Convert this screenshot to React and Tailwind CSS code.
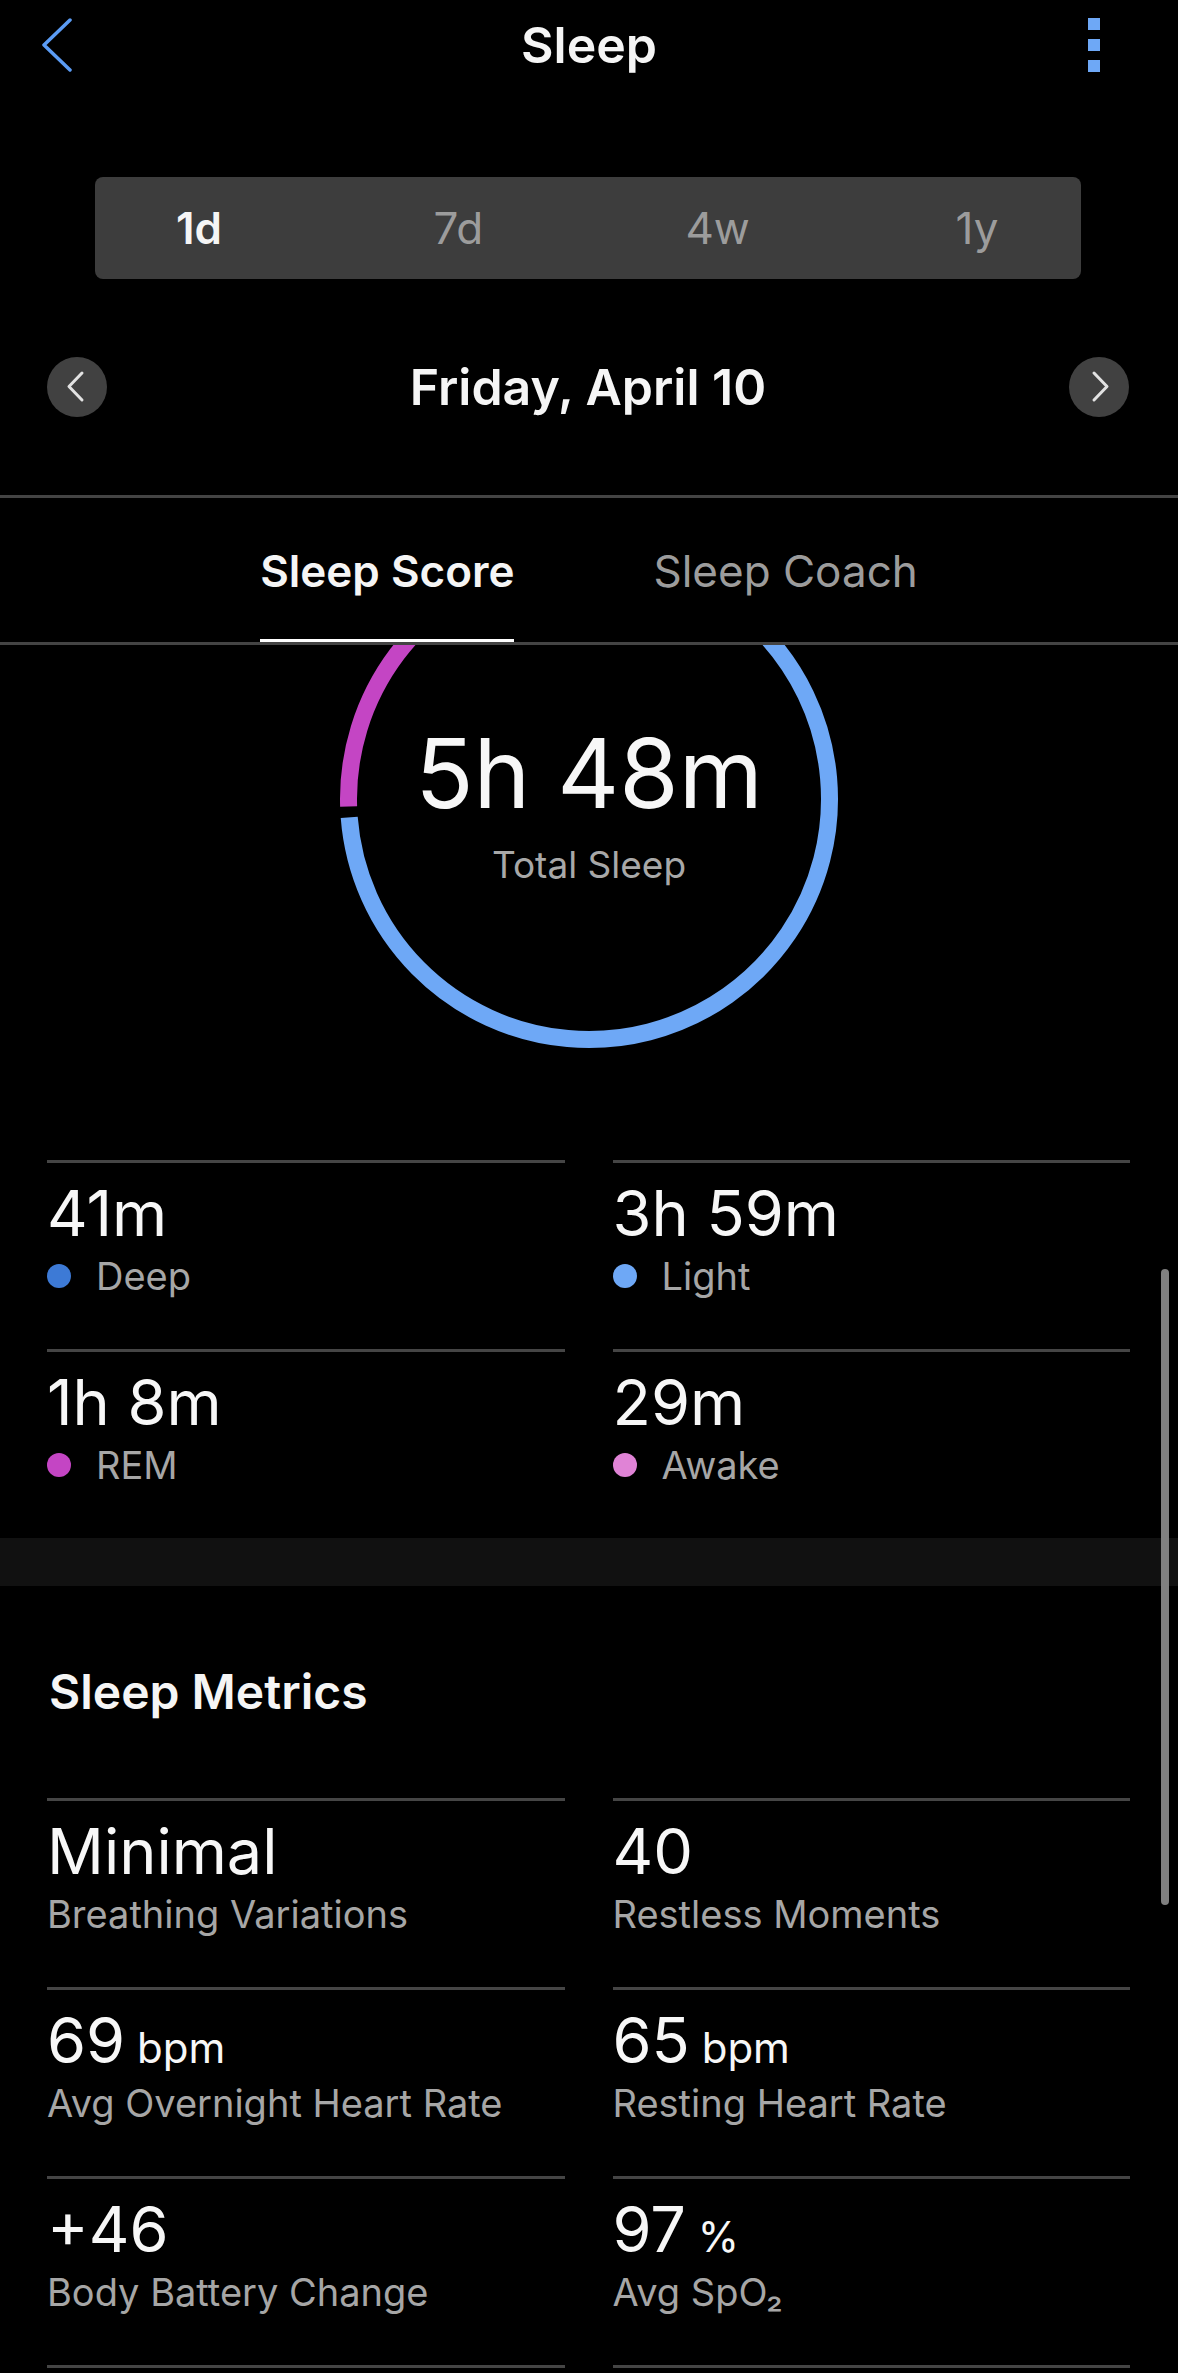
import React from "react";

function arcPath(cx, cy, r, a0, a1) {
  const rad = (d) => (d * Math.PI) / 180;
  const x0 = cx + r * Math.cos(rad(a0));
  const y0 = cy + r * Math.sin(rad(a0));
  const x1 = cx + r * Math.cos(rad(a1));
  const y1 = cy + r * Math.sin(rad(a1));
  let sweep = a1 - a0;
  if (sweep < 0) sweep += 360;
  const large = sweep > 180 ? 1 : 0;
  return `M ${x0} ${y0} A ${r} ${r} 0 ${large} 1 ${x1} ${y1}`;
}

function Ring() {
  const cx = 589;
  const cy = 154;
  const r = 240.5;
  const segs = [
    { a0: 178.2, a1: 256, c: "#c445c4" },
    { a0: 258, a1: 272, c: "#e083d6" },
    { a0: 274, a1: 292, c: "#3d7ad6" },
    { a0: 294, a1: 175.6, c: "#6ea8f6" },
  ];
  return (
    <svg width="1178" height="515" viewBox="0 0 1178 515" className="absolute inset-0">
      {segs.map((s, i) => (
        <path key={i} d={arcPath(cx, cy, r, s.a0, s.a1)} stroke={s.c} strokeWidth="17" fill="none" strokeLinecap="butt" />
      ))}
    </svg>
  );
}

function StatCell({ value, unit, label, dot }) {
  return (
    <div className="h-[189px] border-t-[3px] border-[#454545] pt-[19px]">
      {value !== undefined && (
        <>
          <div className="text-[63px] leading-none text-[#f7f7f7] whitespace-nowrap">
            {value}
            {unit && <span className="text-[42px]"> {unit}</span>}
          </div>
          <div className="mt-[12px] flex items-center">
            {dot && <span className={`w-[24px] h-[24px] rounded-full mr-[25px] ${dot}`} />}
            <span className="text-[38px] leading-none text-[#a6a6a6] whitespace-nowrap">{label}</span>
          </div>
        </>
      )}
    </div>
  );
}

export default function App() {
  return (
    <div className="relative w-[1178px] h-[2373px] overflow-hidden bg-black text-white font-['Inter','Noto_Sans',sans-serif]">
      {/* Header */}
      <div className="h-[90px] grid grid-cols-[1fr_auto_1fr] items-center">
        <div className="pl-[41px] flex items-center">
          <svg width="32" height="54" viewBox="0 0 32 54">
            <polyline points="29,2 3,27 29,52" fill="none" stroke="#5b9cf5" strokeWidth="3.5" strokeLinecap="round" strokeLinejoin="round" />
          </svg>
        </div>
        <div className="text-[50px] leading-none font-semibold text-[#f5f5f5]">Sleep</div>
        <div className="flex justify-end pr-[78px]">
          <div className="flex flex-col gap-[9px]">
            <span className="w-[12px] h-[12px] bg-[#6ea8f6]" />
            <span className="w-[12px] h-[12px] bg-[#6ea8f6]" />
            <span className="w-[12px] h-[12px] bg-[#6ea8f6]" />
          </div>
        </div>
      </div>

      {/* Segmented control */}
      <div className="mt-[87px] ml-[95px] w-[986px] h-[102px] rounded-[8px] bg-[#3d3d3d] flex items-center justify-between px-[54px]">
        <div className="w-[100px] text-center text-[44px] leading-none font-semibold text-[#f5f5f5]">1d</div>
        <div className="w-[100px] text-center text-[44px] leading-none text-[#9c9c9c]">7d</div>
        <div className="w-[100px] text-center text-[44px] leading-none text-[#9c9c9c]">4w</div>
        <div className="w-[100px] text-center text-[44px] leading-none text-[#9c9c9c]">1y</div>
      </div>

      {/* Date row */}
      <div className="mt-[78px] h-[60px] flex items-center justify-between pl-[47px] pr-[49px]">
        <div className="w-[60px] h-[60px] rounded-full bg-[#414141] flex items-center justify-center">
          <svg width="60" height="60" viewBox="0 0 60 60">
            <polyline points="35,16 22,29.5 35,43" fill="none" stroke="#e2e2e2" strokeWidth="3" strokeLinecap="round" strokeLinejoin="round" />
          </svg>
        </div>
        <div className="text-[50px] leading-none font-semibold text-[#f5f5f5]">Friday, April 10</div>
        <div className="w-[60px] h-[60px] rounded-full bg-[#414141] flex items-center justify-center">
          <svg width="60" height="60" viewBox="0 0 60 60">
            <polyline points="25,16 38,29.5 25,43" fill="none" stroke="#e2e2e2" strokeWidth="3" strokeLinecap="round" strokeLinejoin="round" />
          </svg>
        </div>
      </div>

      {/* Divider */}
      <div className="mt-[78px] h-[3px] bg-[#444]" />

      {/* Tabs */}
      <div className="flex justify-center gap-[139px]">
        <div className="pt-[51px] pb-[46px] border-b-[3px] border-white text-[44px] leading-none font-semibold text-[#f5f5f5]">Sleep Score</div>
        <div className="pt-[51px] pb-[46px] border-b-[3px] border-transparent text-[44px] leading-none text-[#9c9c9c]">Sleep Coach</div>
      </div>
      <div className="h-[3px] bg-[#444]" />

      {/* Ring */}
      <div className="relative h-[515px]">
        <Ring />
        <div className="relative pt-[80px] flex flex-col items-center">
          <div className="text-[96px] leading-none text-[#f7f7f7]">5h 48m</div>
          <div className="mt-[25px] text-[37px] leading-none text-[#a8a8a8]">Total Sleep</div>
        </div>
      </div>

      {/* Stages */}
      <div className="grid grid-cols-2 gap-x-[48px] pl-[47px] pr-[48px]">
        <StatCell value="41m" label="Deep" dot="bg-[#3d7ad6]" />
        <StatCell value="3h 59m" label="Light" dot="bg-[#6ea8f6]" />
        <StatCell value="1h 8m" label="REM" dot="bg-[#c445c4]" />
        <StatCell value="29m" label="Awake" dot="bg-[#e083d6]" />
      </div>

      {/* Band */}
      <div className="h-[48px] bg-[#111111]" />

      {/* Sleep Metrics */}
      <div className="pt-[82px] pl-[49px] text-[48px] leading-none font-semibold text-[#f5f5f5]">Sleep Metrics</div>
      <div className="mt-[82px] grid grid-cols-2 gap-x-[48px] pl-[47px] pr-[48px]">
        <StatCell value="Minimal" label="Breathing Variations" />
        <StatCell value="40" label="Restless Moments" />
        <StatCell value="69" unit="bpm" label="Avg Overnight Heart Rate" />
        <StatCell value="65" unit="bpm" label="Resting Heart Rate" />
        <StatCell value="+46" label="Body Battery Change" />
        <StatCell value="97" unit="%" label="Avg SpO₂" />
        <StatCell />
        <StatCell />
      </div>

      {/* Scrollbar */}
      <div className="absolute left-[1161px] top-[1269px] w-[8px] h-[636px] rounded-full bg-[#808080]" />
    </div>
  );
}
